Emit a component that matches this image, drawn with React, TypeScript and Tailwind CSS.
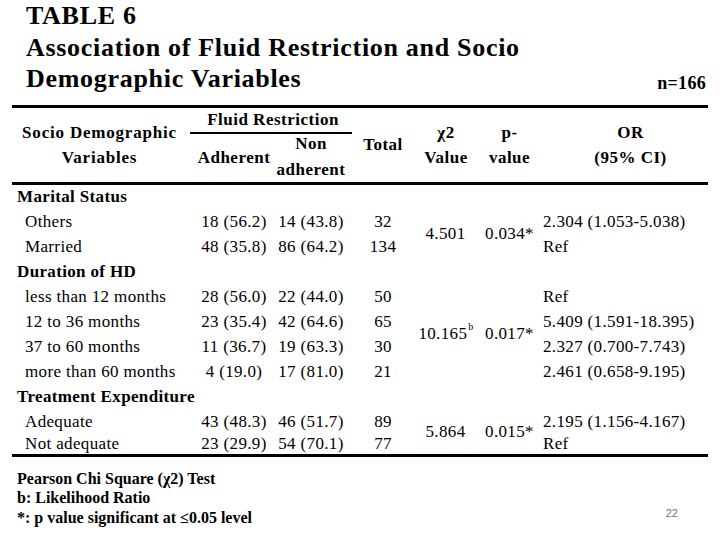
const serif = { fontFamily: '"Liberation Serif", "Times New Roman", serif' };

type Row = {
  label: string;
  head?: boolean;
  adh?: string;
  non?: string;
  total?: string;
  or?: string;
};

const rows: Row[] = [
  { label: 'Marital Status', head: true },
  { label: 'Others', adh: '18 (56.2)', non: '14 (43.8)', total: '32', or: '2.304 (1.053-5.038)' },
  { label: 'Married', adh: '48 (35.8)', non: '86 (64.2)', total: '134', or: 'Ref' },
  { label: 'Duration of HD', head: true },
  { label: 'less than 12 months', adh: '28 (56.0)', non: '22 (44.0)', total: '50', or: 'Ref' },
  { label: '12 to 36 months', adh: '23 (35.4)', non: '42 (64.6)', total: '65', or: '5.409 (1.591-18.395)' },
  { label: '37 to 60 months', adh: '11 (36.7)', non: '19 (63.3)', total: '30', or: '2.327 (0.700-7.743)' },
  { label: 'more than 60 months', adh: '4 (19.0)', non: '17 (81.0)', total: '21', or: '2.461 (0.658-9.195)' },
  { label: 'Treatment Expenditure', head: true },
  { label: 'Adequate', adh: '43 (48.3)', non: '46 (51.7)', total: '89', or: '2.195 (1.156-4.167)' },
  { label: 'Not adequate', adh: '23 (29.9)', non: '54 (70.1)', total: '77', or: 'Ref' },
];

const tests = [
  { value: '4.501', sup: '', p: '0.034*', row: 'row-start-2 row-span-2' },
  { value: '10.165', sup: 'b', p: '0.017*', row: 'row-start-5 row-span-4' },
  { value: '5.864', sup: '', p: '0.015*', row: 'row-start-10 row-span-2' },
];

const cols = 'grid grid-cols-[184px_76px_78px_66px_60px_67px_165px]';

export default function App() {
  return (
    <div className="w-[720px] h-[540px] bg-white text-black overflow-hidden relative" style={serif}>
      <div className="flex items-end justify-between pl-[26px] pr-[14px]">
        <h1 className="text-[26px] leading-[31.5px] font-bold tracking-[0.7px]">
          TABLE 6
          <br />
          Association of Fluid Restriction and Socio
          <br />
          Demographic Variables
        </h1>
        <span className="text-[18px] font-bold mb-[-2px] tracking-[0.3px]">n=166</span>
      </div>

      <div className="mx-[12px] mt-[10px] border-t-[3px] border-black">
        <div className={`${cols} grid-rows-[25px_49px] font-bold text-[17px] leading-[25px] text-center tracking-[0.5px]`}>
          <div className="row-span-2 flex flex-col justify-center pr-[9px] tracking-[0.8px] whitespace-nowrap">
            <span>Socio Demographic</span>
            <span>Variables</span>
          </div>
          <div className="col-span-2 flex flex-col items-center justify-end">
            <span className="leading-[24px]">Fluid Restriction</span>
            <span className="h-[2px] w-[162px] bg-black mb-[-1px] ml-[-5px]" />
          </div>
          <div className="row-span-2 flex items-center justify-center">Total</div>
          <div className="row-span-2 flex flex-col justify-center">
            <span>χ2</span>
            <span>Value</span>
          </div>
          <div className="row-span-2 flex flex-col justify-center">
            <span>p-</span>
            <span>value</span>
          </div>
          <div className="row-span-2 flex flex-col justify-center pl-[10px]">
            <span>OR</span>
            <span>(95% CI)</span>
          </div>
          <div className="col-start-2 row-start-2 flex items-center justify-center">Adherent</div>
          <div className="col-start-3 row-start-2 flex flex-col justify-center leading-[26px]">
            <span>Non</span>
            <span>adherent</span>
          </div>
        </div>

        <div
          className={`${cols} grid-rows-[24px_repeat(9,25px)_20px] border-t-[3px] border-b-[3px] border-black text-[17px] leading-[25px] tracking-[0.35px]`}
        >
          {rows.map((r, i) => (
            <div key={r.label} className="contents">
              <div
                className={`col-start-1 flex items-center whitespace-nowrap ${
                  r.head ? 'pl-[5px] font-bold' : 'pl-[13px]'
                }`}
                style={{ gridRowStart: i + 1 }}
              >
                {r.label}
              </div>
              {!r.head && (
                <>
                  <div className="col-start-2 flex items-center justify-center" style={{ gridRowStart: i + 1 }}>
                    {r.adh}
                  </div>
                  <div className="col-start-3 flex items-center justify-center" style={{ gridRowStart: i + 1 }}>
                    {r.non}
                  </div>
                  <div className="col-start-4 flex items-center justify-center" style={{ gridRowStart: i + 1 }}>
                    {r.total}
                  </div>
                  <div className="col-start-7 flex items-center whitespace-nowrap" style={{ gridRowStart: i + 1 }}>
                    {r.or}
                  </div>
                </>
              )}
            </div>
          ))}
          {tests.map((t) => (
            <div key={t.value} className="contents">
              <div className={`col-start-5 ${t.row} flex items-center justify-center`}>
                {t.value}
                <sup className="text-[10px] ml-[1px] -translate-y-[2px]">{t.sup}</sup>
              </div>
              <div className={`col-start-6 ${t.row} flex items-center justify-center`}>{t.p}</div>
            </div>
          ))}
        </div>
      </div>

      <div className="flex items-end justify-between pl-[17px] pr-[42px] mt-[12px]">
        <div className="text-[16px] leading-[19.5px] font-bold whitespace-nowrap">
          <div>Pearson Chi Square (χ2) Test</div>
          <div>b: Likelihood Ratio</div>
          <div>*: p value significant at ≤0.05 level</div>
        </div>
        <span className="text-[11px] text-gray-500 mb-[6px]" style={{ fontFamily: '"Liberation Sans", Arial, sans-serif' }}>
          22
        </span>
      </div>
    </div>
  );
}
